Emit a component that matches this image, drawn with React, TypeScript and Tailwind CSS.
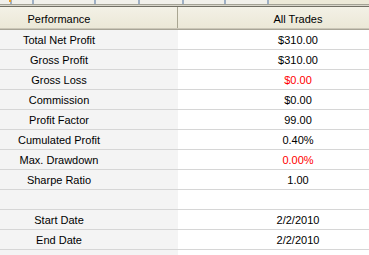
const rows: { label: string; value: string; red?: boolean }[] = [
  { label: 'Total Net Profit', value: '$310.00' },
  { label: 'Gross Profit', value: '$310.00' },
  { label: 'Gross Loss', value: '$0.00', red: true },
  { label: 'Commission', value: '$0.00' },
  { label: 'Profit Factor', value: '99.00' },
  { label: 'Cumulated Profit', value: '0.40%' },
  { label: 'Max. Drawdown', value: '0.00%', red: true },
  { label: 'Sharpe Ratio', value: '1.00' },
  { label: '', value: '' },
  { label: 'Start Date', value: '2/2/2010' },
  { label: 'End Date', value: '2/2/2010' },
  { label: '', value: '' },
];

const tabStops = [12, 22, 62, 44, 44, 42, 43];

function TabStrip() {
  return (
    <div className="flex h-[4px] bg-[#ece9d8]">
      <div className="flex h-full bg-[#f1f0ea]">
        {tabStops.map((w, i) => (
          <div
            key={i}
            className={`h-full border-r-2 border-[#9fb0c4] ${i === 0 ? 'relative' : ''}`}
            style={{ width: w }}
          >
            {i === 0 && <div className="absolute right-[-1px] top-0 h-[2px] w-[2px] bg-[#f0a020]" />}
          </div>
        ))}
      </div>
    </div>
  );
}

function Cell({ side, children, className = '' }: { side: 'left' | 'right'; children?: React.ReactNode; className?: string }) {
  return side === 'left' ? (
    <div className={`w-[178px] shrink-0 overflow-visible ${className}`}>
      <div className="w-[118px] text-center">{children}</div>
    </div>
  ) : (
    <div className={`w-[240px] shrink-0 text-center ${className}`}>{children}</div>
  );
}

export default function App() {
  return (
    <div
      className="w-[369px] h-[255px] overflow-hidden bg-white text-[11px] text-black"
      style={{ fontFamily: '"Liberation Sans", Arial, sans-serif' }}
    >
      <TabStrip />
      <div className="h-px bg-[#a3a295]" />
      <div className="h-px bg-[#d8d6cb]" />
      <div className="h-px bg-[#716f64]" />
      <div className="flex h-[21px] bg-gradient-to-b from-[#f3f1e6] to-[#ebe8d7] leading-[21px]">
        <Cell side="left" className="h-full border-r border-[#a9a692] pt-[2px]">Performance</Cell>
        <div className="h-full w-px bg-white" />
        <Cell side="right" className="pt-[2px]">All Trades</Cell>
      </div>
      <div className="h-px bg-[#cbc7b8]" />
      <div className="h-px bg-[#a8a597]" />
      {rows.map((r, i) => (
        <div key={i} className="flex h-[20px] border-b border-[#d6d6d6] leading-[19px]">
          <Cell side="left" className="bg-[#f4f4f4] pt-px">{r.label}</Cell>
          <div className="w-px bg-[#d6d6d6]" />
          <Cell side="right" className={`pt-px ${r.red ? 'text-[#ff0000]' : ''}`}>{r.value}</Cell>
        </div>
      ))}
    </div>
  );
}
